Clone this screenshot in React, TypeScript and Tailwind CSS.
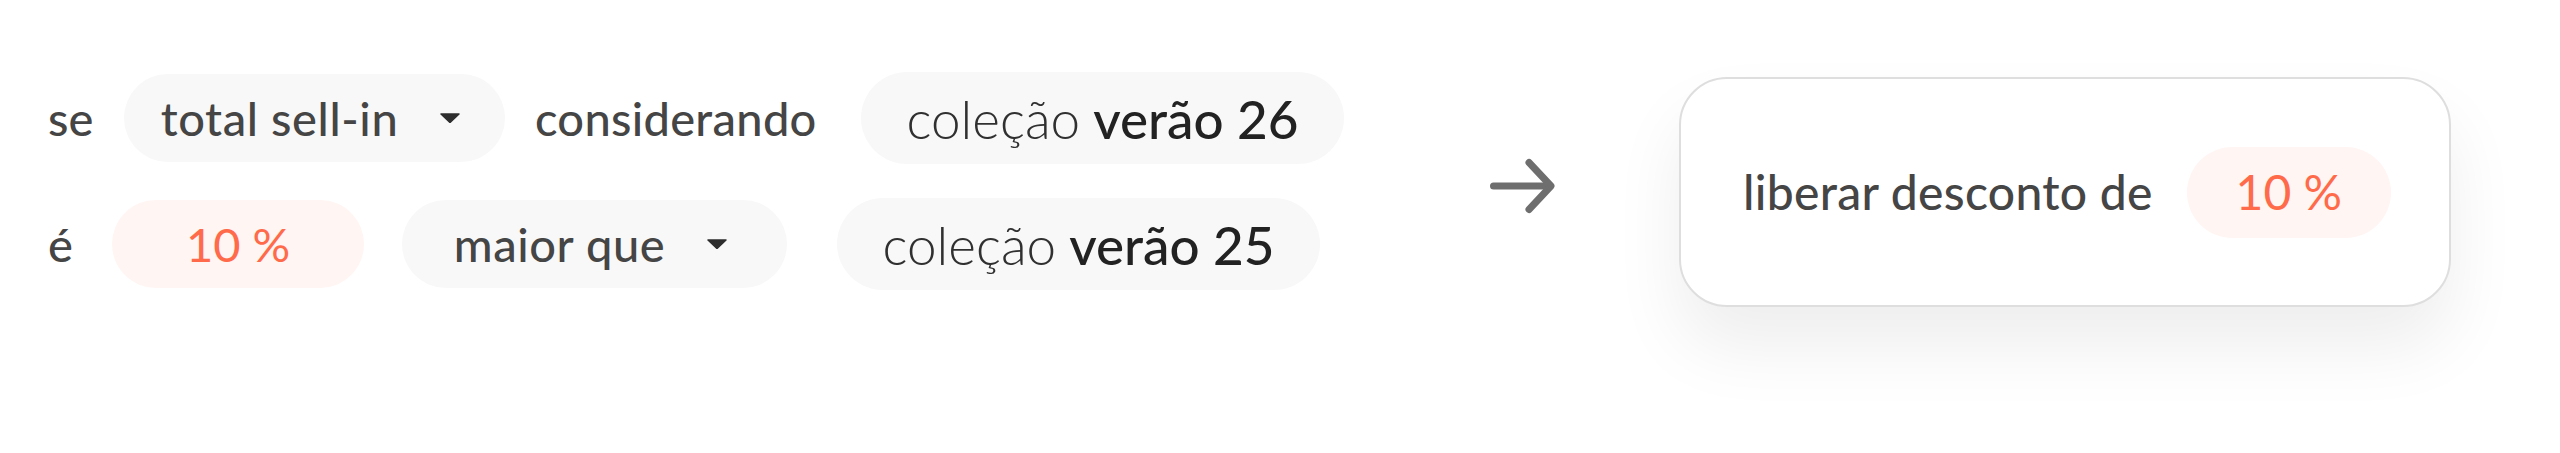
import React from "react";

const font = { fontFamily: '"Lato", "Open Sans", sans-serif' };

function Caret() {
  return (
    <svg width="20" height="10" viewBox="0 0 20 10" className="shrink-0">
      <path d="M1 1 L19 1 L10 9.5 Z" fill="#2e2e2e" stroke="#2e2e2e" strokeWidth="1.5" strokeLinejoin="round" />
    </svg>
  );
}

export default function App() {
  return (
    <div className="w-[2560px] h-[453px] bg-white overflow-hidden flex items-start" style={font}>
      {/* left: conditions */}
      <div className="w-[1486px] shrink-0 pl-[48px] pt-[72px] flex flex-col gap-[34px]">
        {/* row 1 */}
        <div className="h-[92px] flex items-center">
          <span className="w-[76px] text-[47px] font-medium text-[#454545] leading-none">se</span>
          <div className="w-[381px] h-[88px] rounded-full bg-[#f8f8f8] flex items-center justify-center pr-[8px]">
            <span className="text-[47px] font-medium tracking-[0.6px] text-[#454545] leading-none">total sell-in</span>
            <span className="ml-[42px]">
              <Caret />
            </span>
          </div>
          <span className="ml-[30px] w-[326px] text-[47px] font-medium tracking-[0.3px] text-[#454545] leading-none">considerando</span>
          <div className="w-[483px] h-[92px] rounded-full bg-[#f8f8f8] flex items-center justify-center text-[53px] leading-none">
            <span className="font-light text-[#303030]">coleção</span>
            <span className="ml-[13px] font-medium text-[#222222]">verão 26</span>
          </div>
        </div>
        {/* row 2 */}
        <div className="h-[92px] flex items-center">
          <span className="w-[64px] text-[47px] font-medium text-[#454545] leading-none">é</span>
          <div className="w-[252px] h-[88px] rounded-full bg-[#fff5f3] flex items-center justify-center">
            <span className="text-[47px] font-normal text-[#ff6b4a] leading-none">10 %</span>
          </div>
          <div className="ml-[38px] w-[385px] h-[88px] rounded-full bg-[#f8f8f8] flex items-center justify-center pr-[8px]">
            <span className="text-[47px] font-medium tracking-[0.6px] text-[#454545] leading-none">maior que</span>
            <span className="ml-[42px]">
              <Caret />
            </span>
          </div>
          <div className="ml-[50px] w-[483px] h-[92px] rounded-full bg-[#f8f8f8] flex items-center justify-center text-[53px] leading-none">
            <span className="font-light text-[#303030]">coleção</span>
            <span className="ml-[13px] font-medium text-[#222222]">verão 25</span>
          </div>
        </div>
      </div>

      {/* arrow */}
      <svg width="72" height="62" viewBox="0 0 72 62" className="shrink-0 mt-[155px]">
        <path d="M7.5 31 H63" stroke="#6e6e6e" strokeWidth="7" strokeLinecap="round" fill="none" />
        <path d="M43 7.5 L65 31 L43 54.5" stroke="#6e6e6e" strokeWidth="7" strokeLinecap="round" strokeLinejoin="round" fill="none" />
      </svg>

      {/* result card */}
      <div className="ml-[121px] mt-[77px] w-[772px] h-[230px] shrink-0 rounded-[48px] border-2 border-[#dedede] bg-white shadow-[0_40px_70px_rgba(0,0,0,0.07)] flex items-center pl-[62px]">
        <span className="text-[48px] font-medium tracking-[0.3px] text-[#454545] leading-none">liberar desconto de</span>
        <div className="ml-[34px] w-[204px] h-[91px] rounded-full bg-[#fff5f3] flex items-center justify-center">
          <span className="text-[48px] font-normal text-[#ff6b4a] leading-none">10 %</span>
        </div>
      </div>
    </div>
  );
}
